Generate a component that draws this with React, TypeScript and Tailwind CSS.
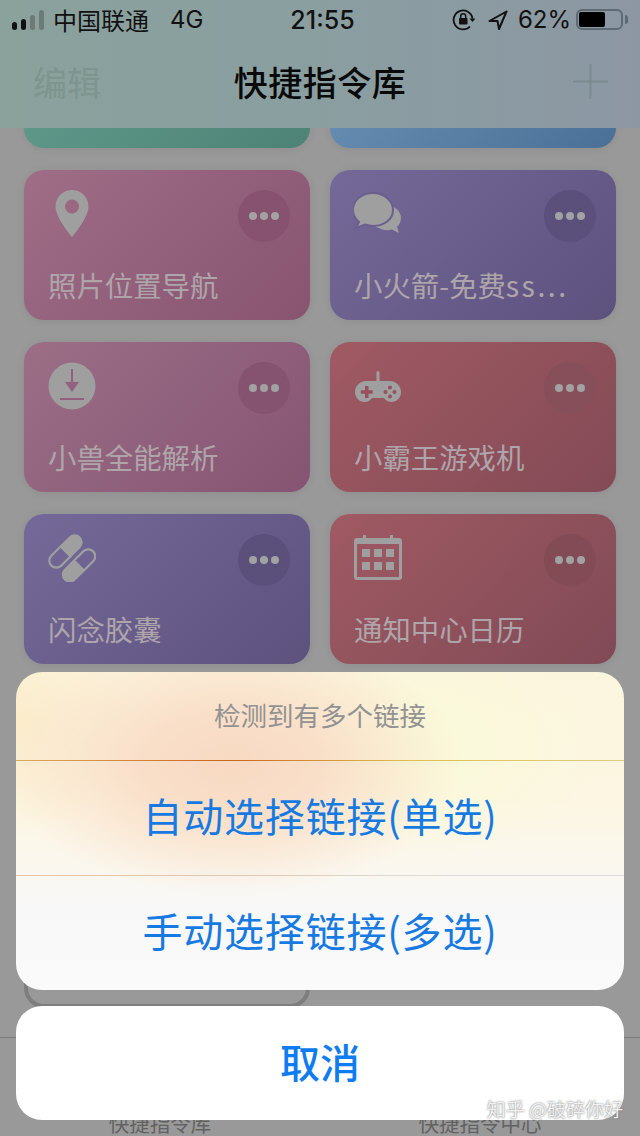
const cjk = "font-['Noto_Sans_CJK_SC','Inter',sans-serif]";

function PinIcon() {
  return (
    <svg width="48" height="48" viewBox="0 0 48 48" fill="#9f9f9f">
      <path
        fillRule="evenodd"
        d="M24 0C14.9 0 7.5 7.4 7.5 16.5 7.5 28 24 47 24 47s16.500-19 16.500-30.500C40.500 7.400 33.100 0 24 0Zm0 9.500a7 7 0 1 1 0 14 7 7 0 0 1 0-14Z"
      />
    </svg>
  );
}

function ChatIcon() {
  return (
    <svg width="48" height="48" viewBox="0 0 48 48" fill="#9f9f9f">
      <path d="M32 15c7.500 0 15 5.500 15 13 0 4-2 7-4 9l2 6-7-3.500c-4 1.200-9 .8-13-1.500l-6-2z" />
      <path
        stroke="#6a5f8e"
        strokeWidth="2"
        d="M19 3C8.500 3-1 9.500-1 20c0 5.500 2.500 9 6 12L2 38l9-3.500c3 1 5.500 1.500 8 1.500 11 0 20-6.500 20-16S30 3 19 3Z"
      />
    </svg>
  );
}

function DownloadIcon() {
  return (
    <svg width="48" height="48" viewBox="0 0 48 48">
      <circle cx="24" cy="24" r="23.500" fill="#9f9f9f" />
      <path d="M23 7h2v14h-2z" fill="#94607f" />
      <path d="M17 20h14l-7 10z" fill="#94607f" />
      <rect x="12" y="36" width="24" height="2" fill="#94607f" />
    </svg>
  );
}

function GamepadIcon() {
  return (
    <svg width="48" height="48" viewBox="0 0 48 48">
      <g transform="translate(0 8)">
        <rect x="22.500" y="1" width="3" height="12" rx="1.500" fill="#9f9f9f" />
        <path
          d="M12 11h24c6 0 11 5 11 11 0 6-4.500 10-9.500 10-3.500 0-5.500-1.500-7.500-4H18c-2 2.500-4 4-7.500 4C5.500 32 1 28 1 22c0-6 5-11 11-11Z"
          fill="#9f9f9f"
        />
        <path d="M11 16h3.500v4.200h4.200v3.600h-4.200V28H11v-4.200H6.800v-3.600H11z" fill="#96505e" />
        <g fill="#96505e">
          <circle cx="36" cy="17.500" r="2" />
          <circle cx="36" cy="26.500" r="2" />
          <circle cx="31.500" cy="22" r="2" />
          <circle cx="40.500" cy="22" r="2" />
        </g>
      </g>
    </svg>
  );
}

function PillsIcon() {
  return (
    <svg width="48" height="48" viewBox="0 0 48 48">
      <g transform="translate(17.500 17.500) rotate(-45)">
        <path d="M0-8h13a8 8 0 0 1 0 16H0z" fill="#9f9f9f" />
        <path d="M0-7h-13a7 7 0 0 0 0 14H0z" fill="none" stroke="#9f9f9f" strokeWidth="2.200" />
      </g>
      <g transform="translate(31 31.500) rotate(-45)">
        <path d="M0-8h-13a8 8 0 0 0 0 16H0z" fill="#9f9f9f" />
        <path d="M0-7h13a7 7 0 0 1 0 14H0z" fill="none" stroke="#9f9f9f" strokeWidth="2.200" />
      </g>
    </svg>
  );
}

function CalendarIcon() {
  return (
    <svg width="48" height="48" viewBox="0 0 48 48" fill="#9f9f9f">
      <rect x="9" y="1" width="3" height="8" />
      <rect x="36" y="1" width="3" height="8" />
      <rect x="1.500" y="5.500" width="45" height="39" rx="1.500" fill="none" stroke="#9f9f9f" strokeWidth="3" />
      <rect x="1" y="5" width="46" height="5" />
      <rect x="8" y="15" width="8" height="8" />
      <rect x="20" y="15" width="8" height="8" />
      <rect x="32" y="15" width="8" height="8" />
      <rect x="8" y="28" width="8" height="8" />
      <rect x="20" y="28" width="8" height="8" />
      <rect x="32" y="28" width="8" height="8" />
    </svg>
  );
}

const cards = [
  { title: "", bg: "bg-[linear-gradient(135deg,#64a090,#4d8275)]", btn: "" },
  { title: "", bg: "bg-[linear-gradient(135deg,#7096ba,#4a7097)]", btn: "" },
  { title: "照片位置导航", bg: "bg-[linear-gradient(135deg,#9e6d86,#885470)]", btn: "bg-[#87526f]", icon: <PinIcon /> },
  { title: "小火箭-免费", latin: "ss...", bg: "bg-[linear-gradient(135deg,#746998,#5d527e)]", btn: "bg-[#5b4f7c]", icon: <ChatIcon /> },
  { title: "小兽全能解析", bg: "bg-[linear-gradient(135deg,#9c6e86,#855472)]", btn: "bg-[#855270]", icon: <DownloadIcon /> },
  { title: "小霸王游戏机", bg: "bg-[linear-gradient(135deg,#a05a63,#834a56)]", btn: "bg-[#874f59]", icon: <GamepadIcon /> },
  { title: "闪念胶囊", bg: "bg-[linear-gradient(135deg,#746998,#5d527e)]", btn: "bg-[#5b4f7c]", icon: <PillsIcon /> },
  { title: "通知中心日历", bg: "bg-[linear-gradient(135deg,#a05a63,#804a56)]", btn: "bg-[#824b56]", icon: <CalendarIcon /> },
  { title: "", bg: "bg-[#8a5572]", btn: "" },
  { title: "", bg: "bg-[#8a5572]", btn: "" },
];

function Card({ card }: { card: (typeof cards)[number] }) {
  return (
    <div className={`h-[150px] rounded-[20px] px-6 pt-5 shadow-[0_1px_8px_rgba(0,0,0,0.08)] ${card.bg}`}>
      <div className="flex h-[52px] items-start justify-between">
        <div className="h-12 w-12">{card.icon}</div>
        {card.btn && (
          <div className={`-mr-1 flex h-[52px] w-[52px] items-center justify-center gap-[3px] rounded-full ${card.btn}`}>
            <span className="h-2 w-2 rounded-full bg-[#a2a2a2]" />
            <span className="h-2 w-2 rounded-full bg-[#a2a2a2]" />
            <span className="h-2 w-2 rounded-full bg-[#a2a2a2]" />
          </div>
        )}
      </div>
      <p className={`mt-[25px] whitespace-nowrap text-[28.4px] leading-9 text-[#aea5aa] ${cjk}`}>
        {card.title}
        {card.latin && <span className="tracking-[2.5px]">{card.latin}</span>}
      </p>
    </div>
  );
}

function StatusBar() {
  return (
    <div className="flex h-10 items-center px-3 pb-px text-[#111]">
      <div className="flex flex-1 items-center">
        <div className="flex items-end gap-1">
          <span className="h-2 w-[5px] rounded-full bg-[#111]" />
          <span className="h-[11px] w-[5px] rounded-full bg-[#111]" />
          <span className="h-[15px] w-[5px] rounded-full bg-[#6d7a78]" />
          <span className="h-5 w-[5px] rounded-full bg-[#6d7a78]" />
        </div>
        <span className={`ml-[9px] text-2xl leading-8 ${cjk}`}>中国联通</span>
        <span className="ml-[21px] font-['Inter',sans-serif] text-2xl leading-8">4G</span>
      </div>
      <span className="pl-[5px] font-['Inter',sans-serif] text-[25px] font-medium leading-8">21:55</span>
      <div className="flex flex-1 items-center justify-end">
        <svg width="23" height="23" viewBox="0 0 23 23" fill="none" stroke="#111" strokeWidth="1.800">
          <path d="M20.500 10.500A9.500 9.500 0 1 0 18 18.500" />
          <path d="M17.500 10.500h6l-3 3.500z" fill="#111" stroke="none" />
          <rect x="7" y="10" width="8.500" height="6.500" rx="1" fill="#111" stroke="none" />
          <path d="M8.700 10V8.200a2.500 2.500 0 0 1 5 0V10" strokeWidth="1.500" />
        </svg>
        <svg className="ml-[13px]" width="20" height="20" viewBox="0 0 20 20" fill="none" stroke="#111" strokeWidth="2" strokeLinejoin="round">
          <path d="M18.500 1.500 1.500 11h8l1.500 8z" />
        </svg>
        <span className="ml-[10px] font-['Inter',sans-serif] text-2xl leading-8">62%</span>
        <div className="ml-[5px] flex h-[21px] w-[47px] items-center rounded-[6px] border-2 border-[#5e6a74] p-[1px]">
          <div className="h-[15px] w-[26px] rounded-[2px] bg-black" />
        </div>
        <div className="ml-[2px] h-[9px] w-[3px] rounded-r-full bg-[#5e6a74]" />
      </div>
    </div>
  );
}

function Header() {
  return (
    <header className="relative z-10 h-[128px] shrink-0 bg-[linear-gradient(90deg,#8aa19c,#8a9fa0_45%,#8c97a3)]">
      <StatusBar />
      <div className="flex h-[88px] items-center pb-[5px] pl-[33px] pr-8">
        <span className={`flex-1 text-[34px] leading-10 text-[#7d948f] ${cjk}`}>编辑</span>
        <h1 className={`pr-px text-[34px] font-medium leading-10 tracking-[0.5px] text-[#0a0a0a] ${cjk}`}>快捷指令库</h1>
        <div className="flex flex-1 justify-end">
          <svg width="35" height="35" viewBox="0 0 35 35" stroke="#7b8b90" strokeWidth="2">
            <path d="M17.500 0v35M0 17.500h35" />
          </svg>
        </div>
      </div>
    </header>
  );
}

function ActionSheet() {
  return (
    <div className={`absolute inset-x-4 top-[672px] z-20 flex flex-col gap-4 ${cjk}`}>
      <div className="flex flex-col overflow-hidden rounded-[26px] bg-[radial-gradient(ellipse_230px_130px_at_215px_92px,#f8d9c1,#f9dfc9_40%,rgba(249,223,201,0)),radial-gradient(ellipse_190px_110px_at_395px_75px,#f9fad8,rgba(249,250,216,0)),radial-gradient(ellipse_130px_110px_at_0px_50px,#fbeccb,rgba(251,236,203,0)),linear-gradient(180deg,#fcf5de,#fcf6e2_130px,#faf7ee_195px,#f8f8f8_235px,#fafafa)]">
        <div className="flex h-[88px] items-center justify-center pb-[2px] text-[26.500px] text-[#929292]">检测到有多个链接</div>
        <div className="h-px bg-[linear-gradient(90deg,#dba95c,#c9661f_35%,#e0c04f_65%,#dfcd7f)]" />
        <button className="flex h-[114px] items-center justify-center pb-[7px] text-[40px] tracking-[0.8px] text-[#177ae2]">自动选择链接(单选)</button>
        <div className="h-px bg-[linear-gradient(90deg,#e3c5a4,#e0c9b4_40%,#dcdcdc_70%,#dcdcdc)]" />
        <button className="flex h-[114px] items-center justify-center pb-[7px] text-[40px] tracking-[0.8px] text-[#177ae2]">手动选择链接(多选)</button>
      </div>
      <button className="flex h-[114px] items-center justify-center rounded-[26px] bg-white pb-[5px] text-[40px] font-medium text-[#0f7cf0]">取消</button>
    </div>
  );
}

export default function App() {
  return (
    <div className="relative flex h-[1136px] w-[640px] flex-col overflow-hidden bg-[#999999]">
      <Header />
      <main className="min-h-0 flex-1 overflow-hidden">
        <div className="-mt-[130px] grid grid-cols-[286px_286px] gap-x-5 gap-y-[22px] pl-6">
          {cards.map((card, i) => (
            <Card key={i} card={card} />
          ))}
          <div className="h-[150px] rounded-[20px] border-4 border-[#7e7e7e]" />
        </div>
      </main>
      <footer className={`flex h-[99px] shrink-0 border-t border-[#7a7a7a] pt-[71px] text-[20.500px] leading-7 text-[#626262] ${cjk}`}>
        <span className="flex-1 text-center">快捷指令库</span>
        <span className="flex-1 text-center">快捷指令中心</span>
      </footer>
      <ActionSheet />
      <span className={`absolute right-[17px] top-[1095px] z-30 whitespace-nowrap text-[19px] leading-7 text-[#f1f1f1] [text-shadow:0_0_2px_#666] ${cjk}`}>
        知乎 @破碎你好
      </span>
    </div>
  );
}
